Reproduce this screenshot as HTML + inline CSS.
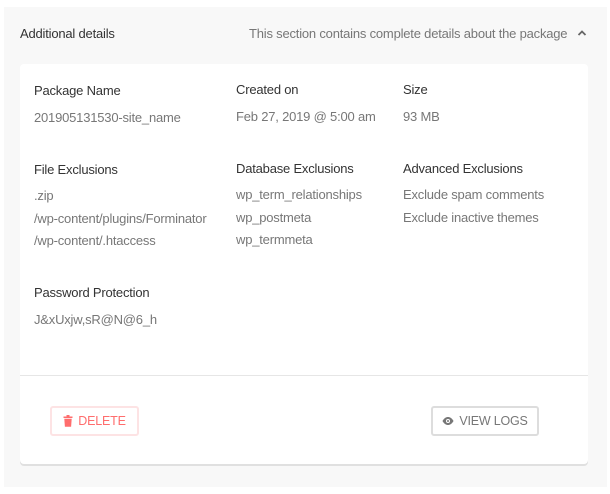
<!DOCTYPE html>
<html><head><style>
body{margin:0;width:610px;height:494px;background:#fff;font-family:"Liberation Sans",sans-serif;position:relative;overflow:hidden}
.outer{position:absolute;left:4px;top:7px;width:603px;height:480px;background:#f8f8f8}
.t{position:absolute;white-space:nowrap;font-size:13px;letter-spacing:-0.2px}
.h{color:#333}
.v{color:#777}
.card{position:absolute;left:20px;top:64px;width:568px;height:400px;background:#fff;border-radius:4px;box-shadow:0 2px 0 #e0e0e0}
.div{position:absolute;left:20px;top:375px;width:568px;height:1px;background:#e6e6e6}
.btn{position:absolute;top:406px;height:26px;border:2px solid;border-radius:3px;font-size:12.5px;display:flex;align-items:center;justify-content:center;gap:5px;letter-spacing:-0.2px}
</style></head><body>
<div class="outer"></div>
<div class="t h" style="left:20px;top:26px">Additional details</div>
<div class="t v" style="left:249px;top:26px">This section contains complete details about the package</div>
<svg style="position:absolute;left:577px;top:29px" width="10" height="8" viewBox="0 0 10 8"><path d="M1.5 6 L5 2.5 L8.5 6" fill="none" stroke="#666" stroke-width="1.8"/></svg>
<div class="card"></div>
<div class="t h" style="left:34px;top:83px">Package Name</div>
<div class="t v" style="left:34px;top:110px">201905131530-site_name</div>
<div class="t h" style="left:236px;top:82px">Created on</div>
<div class="t v" style="left:236px;top:109px">Feb 27, 2019 @ 5:00 am</div>
<div class="t h" style="left:403px;top:82px">Size</div>
<div class="t v" style="left:403px;top:109px">93 MB</div>
<div class="t h" style="left:34px;top:162px">File Exclusions</div>
<div class="t v" style="left:34px;top:185px;line-height:22.5px">.zip<br>/wp-content/plugins/Forminator<br>/wp-content/.htaccess</div>
<div class="t h" style="left:236px;top:161px">Database Exclusions</div>
<div class="t v" style="left:236px;top:184px;line-height:22.5px">wp_term_relationships<br>wp_postmeta<br>wp_termmeta</div>
<div class="t h" style="left:403px;top:161px">Advanced Exclusions</div>
<div class="t v" style="left:403px;top:184px;line-height:22.5px">Exclude spam comments<br>Exclude inactive themes</div>
<div class="t h" style="left:34px;top:285px">Password Protection</div>
<div class="t v" style="left:34px;top:312px">J&amp;xUxjw,sR@N@6_h</div>
<div class="div"></div>
<div class="btn" style="left:50px;width:85px;border-color:#fde3e4;color:#ff6d6d">
<svg width="10" height="12" viewBox="0 0 10 12"><rect x="0.5" y="1.5" width="9" height="1.5" fill="#ff6d6d"/><rect x="3.5" y="0" width="3" height="1.5" fill="#ff6d6d"/><path d="M1.3 3.8h7.4l-0.6 8h-6.2z" fill="#ff6d6d"/></svg>DELETE</div>
<div class="btn" style="left:431px;width:104px;border-color:#ddd;color:#777">
<svg width="12" height="8" viewBox="0 0 12 8"><path d="M0.5 4C2 1.2 4 0 6 0s4 1.2 5.5 4C10 6.8 8 8 6 8S2 6.8 0.5 4z" fill="#777"/><circle cx="6" cy="4" r="2" fill="#fff"/><circle cx="6" cy="4" r="1" fill="#777"/></svg>VIEW LOGS</div>
</body></html>
